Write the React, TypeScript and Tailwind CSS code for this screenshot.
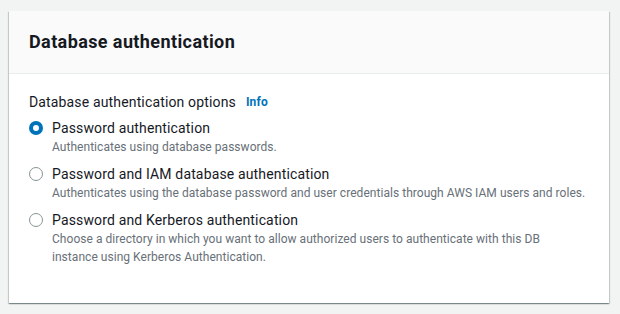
import React from 'react';

const options = [
  {
    label: 'Password authentication',
    desc: ['Authenticates using database passwords.'],
    checked: true,
  },
  {
    label: 'Password and IAM database authentication',
    desc: ['Authenticates using the database password and user credentials through AWS IAM users and roles.'],
    checked: false,
  },
  {
    label: 'Password and Kerberos authentication',
    desc: [
      'Choose a directory in which you want to allow authorized users to authenticate with this DB',
      'instance using Kerberos Authentication.',
    ],
    checked: false,
  },
];

const Radio: React.FC<{ checked: boolean }> = ({ checked }) =>
  checked ? (
    <span className="mt-[3px] flex h-[14px] w-[14px] shrink-0 items-center justify-center rounded-full bg-[#0073bb]">
      <span className="h-[6px] w-[6px] rounded-full bg-white"></span>
    </span>
  ) : (
    <span className="mt-[3px] h-[14px] w-[14px] shrink-0 rounded-full border-[1.5px] border-[#879596] bg-white"></span>
  );

export default function App() {
  return (
    <div
      className="h-[314px] w-[620px] bg-[#f2f3f3] pl-[9px] pt-[11px]"
      style={{ fontFamily: 'Roboto, "Noto Sans", sans-serif' }}
    >
      <div className="w-[600px] bg-white shadow-[0_1px_1px_0_rgba(0,28,36,0.3),1px_1px_1px_0_rgba(0,28,36,0.15),-1px_1px_1px_0_rgba(0,28,36,0.15)]">
        {/* Header */}
        <div className="flex h-[63px] items-center border-b border-[#eaeded] bg-[#fafafa] px-[20px]">
          <h2 className="text-[18px] font-bold leading-[22px] tracking-[0.4px] text-[#16191f]">Database authentication</h2>
        </div>

        {/* Body */}
        <div className="px-[20px] pb-[37px] pt-[18px] text-[#16191f]">
          <div className="flex items-center gap-[10px] text-[14px] leading-[20px] tracking-[0.15px]">
            <span>Database authentication options</span>
            <span className="text-[12px] font-bold text-[#0073bb]">Info</span>
          </div>
          <div className="mt-[6px] flex flex-col gap-[8px]">
            {options.map((o, i) => (
              <div key={i} className="flex gap-[9px]">
                <Radio checked={o.checked} />
                <div>
                  <div className="text-[14px] leading-[20px] tracking-[0.15px]">{o.label}</div>
                  {o.desc.map((d, j) => (
                    <div key={j} className="text-[12px] leading-[18px] tracking-[0.04px] text-[#687078]">
                      {d}
                    </div>
                  ))}
                </div>
              </div>
            ))}
          </div>
        </div>
      </div>
    </div>
  );
}
